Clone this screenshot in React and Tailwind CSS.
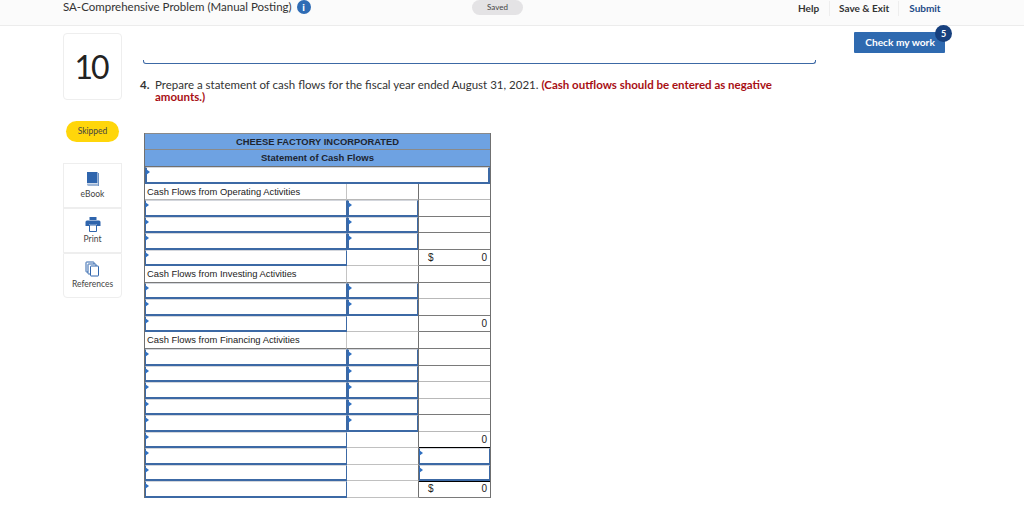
const rows = [
  { label: 'Cash Flows from Operating Activities', line: 'light' },
  { input: true, mid: true },
  { input: true, mid: true },
  { input: true, mid: true },
  { input: true, dollar: true, value: '0' },
  { label: 'Cash Flows from Investing Activities' },
  { input: true, mid: true, line: 'light' },
  { input: true, mid: true },
  { input: true, value: '0' },
  { label: 'Cash Flows from Financing Activities' },
  { input: true, mid: true },
  { input: true, mid: true, line: 'light' },
  { input: true, mid: true, line: 'light' },
  { input: true, mid: true },
  { input: true, mid: true, line: 'light' },
  { input: true, value: '0', line: 'black' },
  { input: true, right: true },
  { input: true, right: true, line: 'black' },
  { input: true, dollar: true, value: '0', total: true },
];

function InputCell({ className = '' }) {
  return (
    <div className={`relative h-full border-t border-t-[#d3d6dc] border-b-2 border-b-[#3c69a5] border-x border-x-[#3c69a5] bg-white ${className}`}>
      <span className="absolute left-[-1px] top-[1px] h-0 w-0 border-y-[3px] border-l-[4px] border-y-transparent border-l-[#2f6fc0]" />
    </div>
  );
}

function Row({ row }) {
  const line = row.line === 'black' ? 'border-b-black' : row.line === 'light' ? 'border-b-[#b8b8b8]' : 'border-b-[#7a7a7a]';
  return (
    <div className="flex h-[16.55px]">
      <div className={`w-[202px] shrink-0 ${row.label ? `border-r border-r-[#c4c4c4] border-b ${line}` : ''}`}>
        {row.label ? (
          <div className="pl-[2px] text-[9.4px] leading-[16px] text-[#222]">{row.label}</div>
        ) : (
          <InputCell />
        )}
      </div>
      <div className={`w-[72px] shrink-0 border-r border-r-[#707070] ${row.mid ? '' : `border-b ${row.input ? 'border-b-[#c0c0c0]' : line}`}`}>
        {row.mid && <InputCell className="border-l-2" />}
      </div>
      <div className={`flex-1 ${row.right ? '' : `border-b ${line}`} ${row.total ? 'border-y border-y-black' : ''}`}>
        {row.right ? (
          <InputCell />
        ) : (
          <div className={`flex h-full items-center justify-between pl-[9px] pr-[3px] text-[10px] text-[#222] ${row.total ? 'pb-[2px]' : ''}`}>
            <span>{row.dollar ? '$' : ''}</span>
            <span>{row.value}</span>
          </div>
        )}
      </div>
    </div>
  );
}

function SideItem({ label, icon, last }) {
  return (
    <div className={`flex h-[45px] flex-col items-center justify-center border border-[#eeeeee] ${last ? 'rounded-b' : ''}`}>
      {icon}
      <span className="mt-[2px] text-[8.5px] leading-[11px] text-[#444]">{label}</span>
    </div>
  );
}

export default function App() {
  return (
    <div className="min-h-[531px] bg-white font-['Lato','Noto_Sans',sans-serif] text-[#222]">
      <div className="flex h-[26px] items-start border-b border-[#ececec] bg-[#fbfbfb] pl-[63px]">
        <div className="flex w-[409px] items-center gap-[5px]">
          <span className="text-[11.5px] leading-[14px] text-[#333]">SA-Comprehensive Problem (Manual Posting)</span>
          <span className="flex h-[14px] w-[14px] items-center justify-center rounded-full bg-[#2f6cb5] text-[10px] font-black leading-none text-white">i</span>
        </div>
        <div className="flex h-[15px] w-[51px] items-center justify-center rounded-full bg-[#e4e3e5] pb-[2px] text-[8px] text-[#444]">Saved</div>
        <div className="ml-[275px] flex h-[16px] items-center text-[10px] font-bold">
          <span className="pr-[10px] text-[#333]">Help</span>
          <span className="border-x border-[#eee] px-[9px] text-[#333]">Save &amp; Exit</span>
          <span className="pl-[10px] text-[#1d4a86]">Submit</span>
        </div>
      </div>

      <div className="flex pl-[63px] pt-[7px]">
        <div className="w-[59px] shrink-0">
          <div className="flex h-[67px] items-center justify-center rounded border border-[#eeeeee] pr-[3px] text-[32px] leading-none tracking-[-2px] text-[#222]">10</div>
          <div className="mx-[3px] mt-[21px] flex h-[21px] items-center justify-center rounded-full bg-[#ffd60a] text-[8.5px] text-[#444]">Skipped</div>
          <div className="mt-[21px]">
            <SideItem
              label="eBook"
              icon={
                <svg width="16" height="16" viewBox="0 0 16 16">
                  <path d="M2 1h10.500v11H2z" fill="#2f65ad" />
                  <path d="M2 12.500h11.500V15H3.500C2.500 15 2 14.400 2 13.600z" fill="#9db5d6" />
                  <path d="M13 2h1v13h-1z" fill="#6f93c4" />
                </svg>
              }
            />
            <SideItem
              label="Print"
              icon={
                <svg width="16" height="15" viewBox="0 0 16 15">
                  <path d="M4.500 0h7v3h-7z" fill="#2f65ad" />
                  <path d="M2 3.500h12a1.500 1.500 0 0 1 1.500 1.500v4h-3.500V7.500H4V9H.5V5A1.500 1.500 0 0 1 2 3.500z" fill="#2f65ad" />
                  <path d="M4.500 8h7v6.500h-7z" fill="#fff" stroke="#2f65ad" />
                </svg>
              }
            />
            <SideItem
              last
              label="References"
              icon={
                <svg width="15" height="16" viewBox="0 0 15 16" fill="#fff" stroke="#2f65ad">
                  <rect x="1" y="1" width="8" height="10" rx="0.5" />
                  <rect x="3" y="3" width="8" height="10" rx="0.5" />
                  <rect x="5.500" y="5" width="8" height="10" rx="0.5" />
                </svg>
              }
            />
          </div>
        </div>

        <div className="ml-[18px] w-[678px] shrink-0">
          <div className="mt-[25px] ml-[3px] mr-[2px] h-[6px] rounded-b-[3px] border-x border-b border-[#3c69a5] [clip-path:inset(2px_0_0_0)]" />
          <div className="mt-[15px] flex text-[11.5px] leading-[12px] text-[#333]">
            <b className="w-[15px] shrink-0">4.</b>
            <p>
              Prepare a statement of cash flows for the fiscal year ended August 31, 2021.{' '}
              <b className="text-[#a80f14]">(Cash outflows should be entered as negative amounts.)</b>
            </p>
          </div>

          <div className="mt-[30px] ml-[4px] w-[347px] border-x border-[#707070] font-['Liberation_Sans',sans-serif]">
            <div className="h-[17px] border-y border-[#8a8a8a] bg-[#6ea2e2] text-center text-[9.4px] font-bold leading-[16px] text-[#1d2530]">CHEESE FACTORY INCORPORATED</div>
            <div className="h-[16.5px] border-b border-[#707070] bg-[#6ea2e2] text-center text-[9.5px] font-bold leading-[16px] text-[#1d2530]">Statement of Cash Flows</div>
            <div className="h-[17px]"><InputCell className="border-x-2" /></div>
            {rows.map((row, i) => (
              <Row key={i} row={row} />
            ))}
          </div>
        </div>

        <div className="relative ml-[36px] mt-[-1px] h-[21px] w-[91px] self-start rounded-[1px] bg-[#2f6ab0] text-center text-[10.2px] font-bold leading-[20px] text-white">
          <span className="pl-[1px]">Check my work</span>
          <span className="absolute right-[-7px] top-[-7px] flex h-[17px] w-[17px] items-center justify-center rounded-full bg-[#17407e] text-[9px]">5</span>
        </div>
      </div>
    </div>
  );
}
